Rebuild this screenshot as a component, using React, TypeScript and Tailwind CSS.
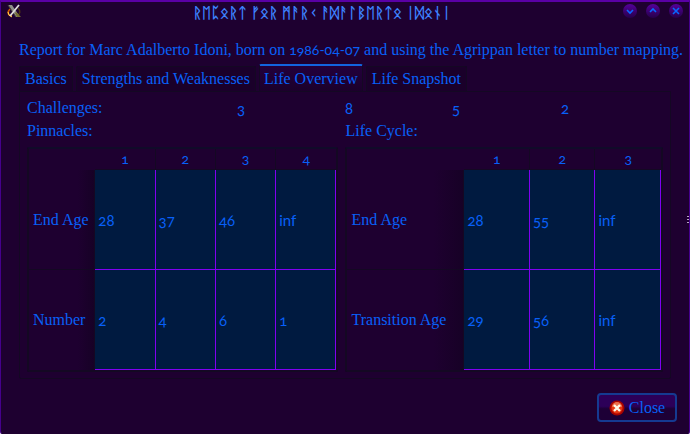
import type { ReactNode } from "react";

const tabs = ["Basics", "Strengths and Weaknesses", "Life Overview", "Life Snapshot"];
const challenges = ["3", "8", "5", "2"];

type Grid = { labels: string[]; rows: string[][]; headWidth: string; colWidth: string; title: string };

const pinnacles: Grid = {
  title: "Pinnacles",
  labels: ["End Age", "Number"],
  rows: [
    ["28", "37", "46", "inf"],
    ["2", "4", "6", "1"],
  ],
  headWidth: "w-[66px]",
  colWidth: "w-[60px]",
};

const lifeCycle: Grid = {
  title: "Life Cycle",
  labels: ["End Age", "Transition Age"],
  rows: [
    ["28", "55", "inf"],
    ["29", "56", "inf"],
  ],
  headWidth: "w-[116px]",
  colWidth: "w-[65px]",
};

function DataGrid({ grid }: { grid: Grid }) {
  return (
    <div className="rounded-xs border-2 border-[#140823] border-t-[#100b29]">
      <table aria-label={grid.title} className="w-full table-fixed border-separate border-spacing-0 text-left">
        <thead>
          <tr className="h-[21px]">
            <td className={grid.headWidth} />
            {grid.rows[0].map((_, i) => (
              <th
                key={i}
                scope="col"
                className={`${grid.colWidth} border-b border-[#140823] p-0 text-center font-[Lato,sans-serif] text-sm leading-5 font-normal oldstyle-nums not-last:border-r`}
              >
                {i + 1}
              </th>
            ))}
          </tr>
        </thead>
        <tbody>
          {grid.rows.map((row, r) => (
            <tr key={r} className="group h-[100px]">
              <th
                scope="row"
                className="border-r border-[#140823] bg-linear-to-r from-[#1e0030] from-75% to-[#170126] p-0 pl-1 font-normal whitespace-nowrap group-not-last:border-b"
              >
                {grid.labels[r]}
              </th>
              {row.map((v, c) => (
                <td
                  key={c}
                  className="border-r border-b border-[#8000f0] bg-[#001a40] p-0 pl-[3px] font-[Lato,sans-serif] text-[15px] oldstyle-nums"
                >
                  {v}
                </td>
              ))}
            </tr>
          ))}
        </tbody>
      </table>
    </div>
  );
}

function WindowButton({ label, children }: { label: string; children: ReactNode }) {
  return (
    <button
      aria-label={label}
      className="flex size-[14px] items-center justify-center rounded-full bg-linear-to-b from-[#55009c] to-[#26004a]"
    >
      <svg viewBox="0 0 14 14" className="size-[14px]" fill="none" stroke="#0868ff" strokeWidth="1.6">
        {children}
      </svg>
    </button>
  );
}

function AppIcon() {
  return (
    <svg viewBox="0 0 14 14" className="size-[14px]" fill="none">
      <path d="M3 5C0 8 1 12 5 12" stroke="#d65a00" strokeWidth="1.6" />
      <path d="M1 8l1 3 3 2" stroke="#ffd34a" />
      <path d="M11 4c3 3 2 6-1 8" stroke="#4a3512" strokeWidth="1.5" />
      <path d="M1 1h4l8 12H9z" fill="#8f8f89" />
      <path d="M1 1l8 12" stroke="#46443c" />
      <path d="M12 1L3 12" stroke="#dededc" strokeWidth="1.8" />
      <path d="M8 9l2 4h4l-5-5z" fill="#76702f" />
    </svg>
  );
}

function CloseIcon() {
  return (
    <svg viewBox="0 0 16 16" className="size-4" fill="none">
      <circle cx="8" cy="8" r="7.5" fill="#a80300" />
      <circle cx="8" cy="8" r="5.6" fill="#e63512" />
      <path d="M3 7a5 5 0 0 1 10 0z" fill="#ed704c" />
      <path d="M5 5l6 6M11 5l-6 6" stroke="#fff8e8" strokeWidth="2.4" />
    </svg>
  );
}

export default function App() {
  return (
    <div className="relative flex min-h-screen flex-col rounded-b-sm border border-t-2 border-[#45008c] border-t-[#5a00a5] border-b-[#10001c] bg-[#1e0030] font-['Liberation_Serif',serif] text-base leading-5 text-[#0860f8]">
      <header className="flex h-[18px] items-center px-[6px]">
        <AppIcon />
        <h1 className="flex-1 pt-1 text-center text-[15px] leading-4 font-bold whitespace-nowrap text-[#3d82ff]">
          ᚱᛖᛈᛟᚱᛏ ᚠᛟᚱ ᛗᚨᚱᚲ ᚨᛞᚨᛚᛒᛖᚱᛏᛟ ᛁᛞᛟᚾᛁ
        </h1>
        <div className="flex gap-[9px]">
          <WindowButton label="Minimize">
            <path d="M4 6l3 3 3-3" />
          </WindowButton>
          <WindowButton label="Maximize">
            <path d="M4 8l3-3 3 3" />
          </WindowButton>
          <WindowButton label="Close window">
            <path d="M4 4l6 6M10 4l-6 6" />
          </WindowButton>
        </div>
      </header>

      <main className="flex flex-col px-[18px] pt-5">
        <p className="h-5 whitespace-nowrap">
          Report for Marc Adalberto Idoni, born on{" "}
          <time className="font-[Lato,sans-serif] text-sm oldstyle-nums">1986-04-07</time> and using the Agrippan letter
          to number mapping.
        </p>

        <div role="tablist" className="mt-1 flex h-[27px] items-end gap-[3px]">
          {tabs.map((t) => {
            const active = t === "Life Overview";
            return (
              <button
                key={t}
                role="tab"
                aria-selected={active}
                className={
                  active
                    ? "h-[27px] rounded-t-xs border-x border-t-2 border-x-[#140823] border-t-[#1264e0] bg-linear-to-b from-[#23003c] to-[#1b002b] px-1 whitespace-nowrap"
                    : "h-[25px] rounded-t-xs border border-b-0 border-[#140823] bg-[#1a002a] px-[5px] whitespace-nowrap"
                }
              >
                {t}
              </button>
            );
          })}
        </div>

        <section role="tabpanel" aria-label="Life Overview" className="rounded-b-xs border border-[#140823] px-[7px] pt-[6px] pb-[6px]">
          <div className="grid grid-cols-[210fr_108fr_107fr_109fr_102fr]">
            <span>Challenges:</span>
            {challenges.map((c) => (
              <span key={c} className="font-[Lato,sans-serif] text-[15px] oldstyle-nums">
                {c}
              </span>
            ))}
          </div>
          <div className="mt-[3px] grid grid-cols-[311fr_317fr] gap-x-[7px]">
            <div>
              <h2 className="mb-[6px]">Pinnacles:</h2>
              <DataGrid grid={pinnacles} />
            </div>
            <div>
              <h2 className="mb-[6px]">Life Cycle:</h2>
              <DataGrid grid={lifeCycle} />
            </div>
          </div>
        </section>
      </main>

      <footer className="flex justify-end px-3 pt-[14px] pb-3">
        <button className="flex h-[29px] w-20 items-center justify-center gap-1 rounded-sm border-2 border-[#153a91] bg-linear-to-b from-[#2c0058] from-45% to-[#1d0036] to-55%">
          <CloseIcon />
          Close
        </button>
      </footer>

      <div aria-hidden="true" className="absolute top-[214px] right-0 flex flex-col gap-[2px]">
        <i className="h-px w-[2px] bg-[#b9a5c4]" />
        <i className="h-px w-[2px] bg-[#b9a5c4]" />
        <i className="h-px w-[2px] bg-[#b9a5c4]" />
      </div>
    </div>
  );
}
